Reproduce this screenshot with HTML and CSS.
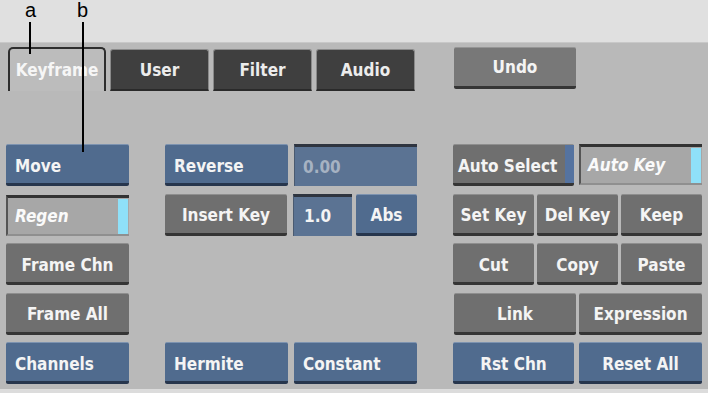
FILE: index.html
```html
<!DOCTYPE html>
<html>
<head>
<meta charset="utf-8">
<link rel="stylesheet" href="styles.css">
</head>
<body>
<div class="screen">
  <div class="top">
    <span class="callout callout-a">a</span>
    <span class="callout callout-b">b</span>
    <span class="leader leader-a"></span>
    <span class="leader leader-b"></span>
  </div>
  <div class="panel">
    <div class="tabbar">
      <div class="tab active">Keyframe</div>
      <div class="tab">User</div>
      <div class="tab">Filter</div>
      <div class="tab">Audio</div>
      <div class="btn grey undo">Undo</div>
    </div>
    <div class="grid">
      <div class="cell left r1"><div class="btn blue al">Move</div></div>
      <div class="cell mid r1">
        <div class="btn blue al">Reverse</div>
        <div class="field dim">0.00</div>
      </div>
      <div class="cell right r1 g5">
        <div class="btn grey al autosel">Auto Select<span class="bluetab"></span></div>
        <div class="toggle ak">Auto Key<span class="cyan"></span></div>
      </div>

      <div class="cell left r2"><div class="toggle regen">Regen<span class="cyan"></span></div></div>
      <div class="cell mid r2">
        <div class="btn grey">Insert Key</div>
        <div class="field num">1.0</div>
        <div class="btn blue abs">Abs</div>
      </div>
      <div class="cell right r2 g3">
        <div class="btn grey">Set Key</div>
        <div class="btn grey">Del Key</div>
        <div class="btn grey">Keep</div>
      </div>

      <div class="cell left r3"><div class="btn grey">Frame Chn</div></div>
      <div class="cell right r3 g3">
        <div class="btn grey">Cut</div>
        <div class="btn grey">Copy</div>
        <div class="btn grey">Paste</div>
      </div>

      <div class="cell left r4"><div class="btn grey">Frame All</div></div>
      <div class="cell right r4 g3">
        <div class="btn grey">Link</div>
        <div class="btn grey">Expression</div>
      </div>

      <div class="cell left r5"><div class="btn blue al">Channels</div></div>
      <div class="cell mid r5">
        <div class="btn blue al">Hermite</div>
        <div class="btn blue al">Constant</div>
      </div>
      <div class="cell right r5 g5">
        <div class="btn blue">Rst Chn</div>
        <div class="btn blue">Reset All</div>
      </div>
    </div>
  </div>
  <div class="bottom"></div>
</div>
</body>
</html>
```
FILE: styles.css
```css
html, body {
  margin: 0;
  padding: 0;
  background: #dedede;
}
.screen {
  width: 708px;
  height: 393px;
  position: relative;
  overflow: hidden;
  font-family: "DejaVu Sans Condensed", "DejaVu Sans", sans-serif;
  font-weight: bold;
  color: #f4f4f4;
}
.top {
  height: 42px;
  background: #e0e0e0;
}
.callout {
  position: absolute;
  top: 0;
  line-height: 1;
  font-family: "Liberation Sans", Arial, sans-serif;
  font-weight: normal;
  font-size: 20px;
  color: #000;
}
.callout-a { left: 25px; }
.callout-b { left: 77px; }
.leader {
  position: absolute;
  width: 2px;
  background: #000;
  z-index: 5;
}
.leader-a { left: 29px; top: 22px; height: 32px; }
.leader-b { left: 82px; top: 22px; height: 130px; }

.panel {
  height: 347px;
  background: #b9b9b9;
  border-top: 1px solid #c8c8c8;
  box-sizing: border-box;
}
.tabbar {
  display: flex;
  align-items: flex-start;
  padding: 4px 0 0 8px;
  height: 49px;
  box-sizing: border-box;
}
.tab {
  width: 99px;
  height: 42px;
  margin-top: 2px;
  margin-right: 4px;
  box-sizing: border-box;
  background: #3f3f3f;
  border: 1px solid #8a8a8a;
  border-bottom: 2px solid #2a2a2a;
  border-radius: 3px 3px 0 0;
  display: flex;
  align-items: center;
  justify-content: center;
  font-size: 17px;
  color: #ececec;
}
.tab.active {
  width: 98px;
  height: 44px;
  margin-top: 0;
  background: #bcbcbc;
  border: 2px solid #2e2e2e;
  border-bottom: none;
  border-radius: 5px 5px 0 0;
  color: #f6f6f6;
}
.btn {
  flex: 1 1 0;
  height: 42px;
  box-sizing: border-box;
  display: flex;
  align-items: center;
  justify-content: center;
  padding-top: 3px;
  font-size: 17px;
  white-space: nowrap;
  border-radius: 2px;
  position: relative;
}
.btn.al {
  justify-content: flex-start;
  padding-left: 9px;
}
.blue {
  background: #506b8e;
  border-top: 1px solid #7d93b0;
  border-bottom: 3px solid #27364d;
}
.grey {
  background: #6f6f6f;
  border-top: 1px solid #8e8e8e;
  border-bottom: 3px solid #353535;
}
.undo {
  flex: 0 0 122px;
  height: 42px;
  margin-left: 35px;
  margin-top: 0;
  padding-top: 0;
  background: #787878;
  border-top: 1px solid #959595;
}
.grid {
  margin-top: 52px;
  margin-left: 6px;
  display: grid;
  grid-template-columns: 123px 252px 249px;
  grid-template-rows: repeat(5, 42px);
  column-gap: 36px;
  row-gap: 7.5px;
}
.cell {
  display: flex;
  gap: 6px;
}
.left { grid-column: 1; }
.mid { grid-column: 2; }
.right { grid-column: 3; }
.r1 { grid-row: 1; }
.r2 { grid-row: 2; }
.r3 { grid-row: 3; }
.r4 { grid-row: 4; }
.r5 { grid-row: 5; }
.g5 { gap: 5px; }
.g3 { gap: 3px; }

.field {
  flex: 1 1 0;
  height: 42px;
  box-sizing: border-box;
  background: #5b7393;
  border-top: 3px solid #2f3540;
  border-left: 1px solid #4a5a70;
  display: flex;
  align-items: center;
  padding-left: 8px;
  font-size: 17px;
}
.field.dim {
  color: #a6b2c2;
}
.field.num {
  flex: 0 0 59px;
  color: #f4f4f4;
  padding-left: 10px;
}
.abs {
  flex: 0 0 61px;
  margin-left: -2px;
}
.toggle {
  flex: 1 1 0;
  height: 41px;
  box-sizing: border-box;
  background: #a7a7a7;
  border-top: 3px solid #333;
  border-left: 2px solid #555;
  border-bottom: 2px solid #8f8f8f;
  display: flex;
  align-items: center;
  padding-left: 7px;
  font-style: italic;
  font-size: 17px;
  color: #fafafa;
  position: relative;
}
.regen {
  margin-top: 1px;
}
.cyan {
  position: absolute;
  right: 1px;
  top: 1px;
  bottom: 0;
  width: 10px;
  background: #8fe0f8;
}
.btn.autosel {
  flex: 0 0 121px;
  padding-left: 5px;
}
.bluetab {
  position: absolute;
  right: 0;
  top: 0;
  bottom: 0;
  width: 9px;
  background: #5573a0;
}
.right.r4 .btn:first-child {
  flex: 0 0 122px;
  margin-left: 1px;
}
.right.r5 .btn:first-child {
  flex: 0 0 121px;
}
.bottom {
  height: 4px;
  background: #dcdcdc;
}
```
